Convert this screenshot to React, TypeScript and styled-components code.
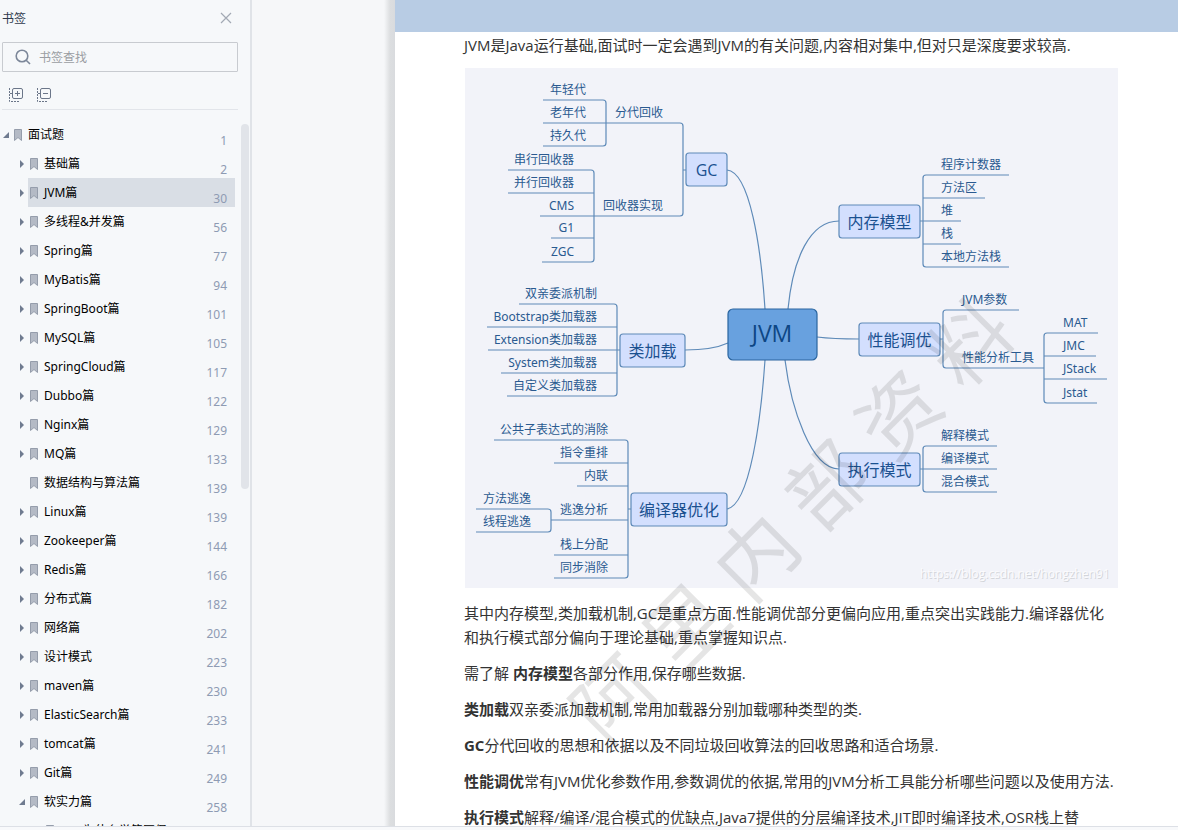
import React from 'react';
import styled, { createGlobalStyle } from 'styled-components';

const uiFont = '"Noto Sans", "Noto Sans CJK SC", sans-serif';
const pageFont = '"Open Sans", "Noto Sans CJK SC", sans-serif';

const GlobalStyle = createGlobalStyle`
  * { box-sizing: border-box; }
  body { margin: 0; background: #f6f7f9; font-family: ${uiFont}; }
`;

const Shell = styled.div`
  display: grid;
  grid-template-columns: 252px 1fr;
  grid-template-rows: minmax(0, 1fr) 4px;
  height: 100vh;
  overflow: hidden;
`;

const Sidebar = styled.aside`
  display: flex;
  flex-direction: column;
  min-height: 0;
  background: #f6f8fa;
  border-right: 2px solid #e0e3e8;
`;

const SidebarHeader = styled.header`
  display: flex;
  align-items: center;
  justify-content: space-between;
  height: 36px;
  padding: 0 18px 0 2px;
`;

const SidebarTitle = styled.h2`
  margin: 0;
  font-size: 12px;
  font-weight: 400;
  color: #2f3a4d;
`;

const IconButton = styled.button`
  display: flex;
  padding: 0;
  border: 0;
  background: none;
  color: #a3a9b4;
`;

const SearchBox = styled.label`
  display: flex;
  align-items: center;
  gap: 8px;
  height: 30px;
  margin: 6px 12px 0 2px;
  padding: 0 12px;
  border: 1px solid #c8cbd0;
  border-radius: 1px;
  color: #7c8799;
`;

const SearchInput = styled.input`
  flex: 1;
  min-width: 0;
  padding: 0;
  border: 0;
  outline: 0;
  background: none;
  font: 12px ${uiFont};
  &::placeholder { color: #9a9da2; opacity: 1; }
`;

const Tools = styled.div`
  display: flex;
  gap: 12px;
  height: 38px;
  margin: 0 12px 0 2px;
  padding: 15px 0 0 6px;
  border-bottom: 1px solid #e2e5ea;
`;

const TreeArea = styled.div`
  display: flex;
  flex: 1;
  min-height: 0;
  margin-top: 10px;
`;

const Tree = styled.ul`
  flex: 1;
  min-width: 0;
  margin: 0;
  padding: 0;
  overflow: hidden;
  list-style: none;
`;

const TreeRow = styled.li<{ $level: number }>`
  display: flex;
  height: 29px;
  margin-right: 6px;
  padding-left: ${p => p.$level * 16}px;
`;

const Toggle = styled.span`
  display: flex;
  align-items: center;
  flex: none;
  width: 12px;
  padding-left: 3px;
`;

const Entry = styled.a<{ $active?: boolean }>`
  display: flex;
  flex: 1;
  align-items: center;
  gap: 6px;
  padding: 0 8px 0 2px;
  background: ${p => (p.$active ? '#d9dee5' : 'transparent')};
  color: #000;
  font-size: 12px;
  line-height: 16px;
  white-space: nowrap;
  text-decoration: none;
`;

const PageNo = styled.span`
  margin-left: auto;
  padding-top: 12px;
  color: #8e9bb3;
`;

const Scrollbar = styled.div`
  width: 8px;
  margin-right: 1px;
  padding-top: 4px;
  &::before {
    content: '';
    display: block;
    height: 52%;
    border-radius: 4px;
    background: #e1e4e9;
  }
`;

const Viewer = styled.main`
  display: grid;
  grid-template-columns: 143px 1fr;
  min-height: 0;
  overflow: hidden;
  background: #f6f7f9;
`;

const Gutter = styled.div`
  background: linear-gradient(to left, #d9dbde 0, #dcdee0 5px, #f6f7f9 11px);
`;

const Page = styled.article`
  position: relative;
  min-width: 0;
  overflow: hidden;
  background: #fff;
  color: #333;
  font-family: ${pageFont};
  font-size: 15px;
  line-height: 24px;
`;

const PageBand = styled.div`
  height: 32px;
  background: #b8cce4;
`;

const Content = styled.div`
  padding: 1px 60px 0 69px;
`;

const Paragraph = styled.p`
  margin: 0 0 12px;
`;

const Figure = styled.figure`
  margin: -1px 0 13px 1px;
  max-width: 653px;
  svg { display: block; width: 100%; height: auto; background: #f2f3f9; }
`;

const Watermark = styled.div`
  position: absolute;
  left: 396px;
  top: 520px;
  transform: translate(-50%, -50%) rotate(-45deg);
  color: rgba(0, 0, 0, 0.1);
  font-size: 80px;
  font-weight: 400;
  line-height: 80px;
  white-space: nowrap;
  pointer-events: none;
`;

const StatusStrip = styled.footer`
  grid-column: 1 / -1;
  border-top: 1px solid #dde0e6;
  background: #f8f9fb;
`;

const LeafText = styled.text`
  fill: #2a5a90;
  font: 12px ${uiFont};
`;

const TopicText = styled.text`
  fill: #1b5190;
  font: 16px ${pageFont};
  text-anchor: middle;
`;

const RootText = styled.text`
  fill: #0d4684;
  font: 23px ${pageFont};
  text-anchor: middle;
`;

const CreditText = styled.text<{ $shade?: boolean }>`
  fill: ${p => (p.$shade ? '#d3d5da' : '#fbfbfd')};
  font: 12px ${pageFont};
`;

type Bookmark = { title: string; page?: number; level?: number; state?: 'open' | 'closed' | 'leaf' };

const bookmarks: Bookmark[] = [
  { title: '面试题', page: 1, level: 0, state: 'open' },
  { title: '基础篇', page: 2 },
  { title: 'JVM篇', page: 30 },
  { title: '多线程&并发篇', page: 56 },
  { title: 'Spring篇', page: 77 },
  { title: 'MyBatis篇', page: 94 },
  { title: 'SpringBoot篇', page: 101 },
  { title: 'MySQL篇', page: 105 },
  { title: 'SpringCloud篇', page: 117 },
  { title: 'Dubbo篇', page: 122 },
  { title: 'Nginx篇', page: 129 },
  { title: 'MQ篇', page: 133 },
  { title: '数据结构与算法篇', page: 139, state: 'leaf' },
  { title: 'Linux篇', page: 139 },
  { title: 'Zookeeper篇', page: 144 },
  { title: 'Redis篇', page: 166 },
  { title: '分布式篇', page: 182 },
  { title: '网络篇', page: 202 },
  { title: '设计模式', page: 223 },
  { title: 'maven篇', page: 230 },
  { title: 'ElasticSearch篇', page: 233 },
  { title: 'tomcat篇', page: 241 },
  { title: 'Git篇', page: 249 },
  { title: '软实力篇', page: 258, state: 'open' },
  { title: 'Java为什么举简历保', level: 2, state: 'leaf' },
];

const Arrow = ({ state }: { state: string }) => (
  <svg width="7" height="8" viewBox="0 0 7 8" fill="#6f7b8f" aria-hidden="true">
    {state === 'open' && <path d="M6 1v6H0z" />}
    {state === 'closed' && <path d="M1 0l4 4-4 4z" />}
  </svg>
);

const Ribbon = () => (
  <svg width="8" height="12" viewBox="0 0 8 12" aria-hidden="true">
    <path d="M.5.5h7v11L4 8.5.5 11.5z" fill="#b4bac5" stroke="#959dab" />
  </svg>
);

const TreeTool = ({ plus }: { plus: boolean }) => (
  <svg width="16" height="16" viewBox="0 0 16 16" fill="none" stroke="#6b7689" aria-hidden="true">
    <path d="M1.500 1v13.500H12" strokeDasharray="2 1" />
    <path d="M2 6.500h2" />
    <rect x="4.500" y="1.500" width="10" height="10" rx="1.500" />
    <path d={plus ? 'M7 6.500h5M9.500 4v5' : 'M7 6.500h5'} />
  </svg>
);

type Leaf = { text: string; y: number; end: number };
type BranchProps = { side: 'left' | 'right'; spine: number; textX: number; leaves: Leaf[] };

/* Underlined leaves that all meet at one vertical spine. */
const Branch = ({ side, spine, textX, leaves }: BranchProps) => {
  const r = side === 'left' ? -3 : 3;
  const first = leaves[0];
  const last = leaves[leaves.length - 1];
  return (
    <g>
      <path
        d={`M${first.end} ${first.y}H${spine + r}Q${spine} ${first.y} ${spine} ${first.y + 3}V${last.y - 3}Q${spine} ${last.y} ${spine + r} ${last.y}H${last.end}`}
      />
      {leaves.slice(1, -1).map(l => (
        <path key={l.text} d={`M${l.end} ${l.y}H${spine}`} />
      ))}
      {leaves.map(l => (
        <LeafText key={l.text} stroke="none" x={textX} y={l.y - 6} textAnchor={side === 'left' ? 'end' : 'start'}>
          {l.text}
        </LeafText>
      ))}
    </g>
  );
};

const branches: BranchProps[] = [
  { side: 'left', spine: 141, textX: 121, leaves: [
    { text: '年轻代', y: 32, end: 78 }, { text: '老年代', y: 55, end: 78 }, { text: '持久代', y: 78, end: 78 },
  ] },
  { side: 'left', spine: 129, textX: 109, leaves: [
    { text: '串行回收器', y: 102, end: 43 }, { text: '并行回收器', y: 125, end: 43 }, { text: 'CMS', y: 148, end: 75 },
    { text: 'G1', y: 170, end: 86 }, { text: 'ZGC', y: 194, end: 77 },
  ] },
  { side: 'left', spine: 218, textX: 198, leaves: [
    { text: '分代回收', y: 55, end: 141 }, { text: '回收器实现', y: 148, end: 129 },
  ] },
  { side: 'left', spine: 152, textX: 132, leaves: [
    { text: '双亲委派机制', y: 236, end: 54 }, { text: 'Bootstrap类加载器', y: 259, end: 22 },
    { text: 'Extension类加载器', y: 282, end: 23 }, { text: 'System类加载器', y: 305, end: 36 },
    { text: '自定义类加载器', y: 328, end: 42 },
  ] },
  { side: 'left', spine: 86, textX: 66, leaves: [
    { text: '方法逃逸', y: 441, end: 11 }, { text: '线程逃逸', y: 464, end: 11 },
  ] },
  { side: 'left', spine: 163, textX: 143, leaves: [
    { text: '公共子表达式的消除', y: 372, end: 29 }, { text: '指令重排', y: 395, end: 89 }, { text: '内联', y: 418, end: 112 },
    { text: '逃逸分析', y: 452, end: 86 }, { text: '栈上分配', y: 487, end: 89 }, { text: '同步消除', y: 510, end: 89 },
  ] },
  { side: 'right', spine: 458, textX: 476, leaves: [
    { text: '程序计数器', y: 107, end: 544 }, { text: '方法区', y: 130, end: 520 }, { text: '堆', y: 153, end: 496 },
    { text: '栈', y: 176, end: 496 }, { text: '本地方法栈', y: 199, end: 544 },
  ] },
  { side: 'right', spine: 478, textX: 497, leaves: [
    { text: 'JVM参数', y: 242, end: 554 }, { text: '性能分析工具', y: 300, end: 579 },
  ] },
  { side: 'right', spine: 579, textX: 598, leaves: [
    { text: 'MAT', y: 265, end: 633 }, { text: 'JMC', y: 288, end: 631 }, { text: 'JStack', y: 311, end: 642 },
    { text: 'Jstat', y: 335, end: 632 },
  ] },
  { side: 'right', spine: 458, textX: 476, leaves: [
    { text: '解释模式', y: 378, end: 532 }, { text: '编译模式', y: 401, end: 532 }, { text: '混合模式', y: 424, end: 532 },
  ] },
];

const topics = [
  { text: 'GC', x: 221, y: 85, w: 41 },
  { text: '类加载', x: 155, y: 266, w: 65 },
  { text: '编译器优化', x: 166, y: 425, w: 96 },
  { text: '内存模型', x: 374, y: 137, w: 81 },
  { text: '性能调优', x: 394, y: 255, w: 81 },
  { text: '执行模式', x: 374, y: 385, w: 81 },
];

const credit = 'https://blog.csdn.net/hongzhen91';

const MindMap = () => (
  <svg viewBox="0 0 653 520" role="img" aria-label="JVM">
    <g fill="none" stroke="#5e8ab8" strokeWidth="1.200">
      <path d="M262 102C285 104 296 180 300 241" />
      <path d="M220 282C240 282 252 280 263 275" />
      <path d="M262 441C285 437 296 350 300 292" />
      <path d="M323 241C328 190 345 153 374 153" />
      <path d="M352 269C368 271 376 271 394 271" />
      <path d="M320 292C326 340 346 401 374 401" />
      <path d="M218 102h3M152 282h3M163 441h3M455 153h3M475 271h3M455 401h3" />
      {branches.map((b, i) => <Branch key={i} {...b} />)}
      {topics.map(t => (
        <g key={t.text}>
          <rect x={t.x} y={t.y} width={t.w} height="33" rx="3" fill="#d3dffe" />
          <TopicText stroke="none" x={t.x + t.w / 2} y={t.y + 23}>{t.text}</TopicText>
        </g>
      ))}
      <rect x="263" y="241" width="89" height="51" rx="5" fill="#68a1df" stroke="#2a659f" />
      <RootText stroke="none" x="307" y="274">JVM</RootText>
    </g>
    <CreditText $shade x="456" y="511" aria-hidden="true">{credit}</CreditText>
    <CreditText x="455" y="510">{credit}</CreditText>
  </svg>
);

export default function App() {
  return (
    <>
      <GlobalStyle />
      <Shell>
        <Sidebar>
          <SidebarHeader>
            <SidebarTitle>书签</SidebarTitle>
            <IconButton aria-label="关闭">
              <svg width="12" height="12" viewBox="0 0 12 12" stroke="currentColor" strokeWidth="1.200">
                <path d="M1 1l10 10M11 1L1 11" />
              </svg>
            </IconButton>
          </SidebarHeader>
          <SearchBox>
            <svg width="16" height="16" viewBox="0 0 16 16" fill="none" stroke="currentColor" strokeWidth="1.600">
              <circle cx="7" cy="7" r="5.800" />
              <path d="M11.200 11.200L15 15" />
            </svg>
            <SearchInput placeholder="书签查找" aria-label="书签查找" />
          </SearchBox>
          <Tools>
            <IconButton aria-label="展开"><TreeTool plus /></IconButton>
            <IconButton aria-label="折叠"><TreeTool plus={false} /></IconButton>
          </Tools>
          <TreeArea>
            <Tree>
              {bookmarks.map(b => (
                <TreeRow key={b.title} $level={b.level ?? 1}>
                  <Toggle><Arrow state={b.state ?? 'closed'} /></Toggle>
                  <Entry href="#" $active={b.title === 'JVM篇'}>
                    <Ribbon />
                    {b.title}
                    {b.page && <PageNo>{b.page}</PageNo>}
                  </Entry>
                </TreeRow>
              ))}
            </Tree>
            <Scrollbar />
          </TreeArea>
        </Sidebar>
        <Viewer>
          <Gutter />
          <Page>
            <PageBand />
            <Content>
              <Paragraph>JVM是Java运行基础,面试时一定会遇到JVM的有关问题,内容相对集中,但对只是深度要求较高.</Paragraph>
              <Figure><MindMap /></Figure>
              <Paragraph>
                其中内存模型,类加载机制,GC是重点方面.性能调优部分更偏向应用,重点突出实践能力.编译器优化和执行模式部分偏向于理论基础,重点掌握知识点.
              </Paragraph>
              <Paragraph>需了解 <b>内存模型</b>各部分作用,保存哪些数据.</Paragraph>
              <Paragraph><b>类加载</b>双亲委派加载机制,常用加载器分别加载哪种类型的类.</Paragraph>
              <Paragraph><b>GC</b>分代回收的思想和依据以及不同垃圾回收算法的回收思路和适合场景.</Paragraph>
              <Paragraph><b>性能调优</b>常有JVM优化参数作用,参数调优的依据,常用的JVM分析工具能分析哪些问题以及使用方法.</Paragraph>
              <Paragraph><b>执行模式</b>解释/编译/混合模式的优缺点,Java7提供的分层编译技术,JIT即时编译技术,OSR栈上替</Paragraph>
            </Content>
            <Watermark aria-hidden="true">阿 里 内 部 资 料</Watermark>
          </Page>
        </Viewer>
        <StatusStrip />
      </Shell>
    </>
  );
}
